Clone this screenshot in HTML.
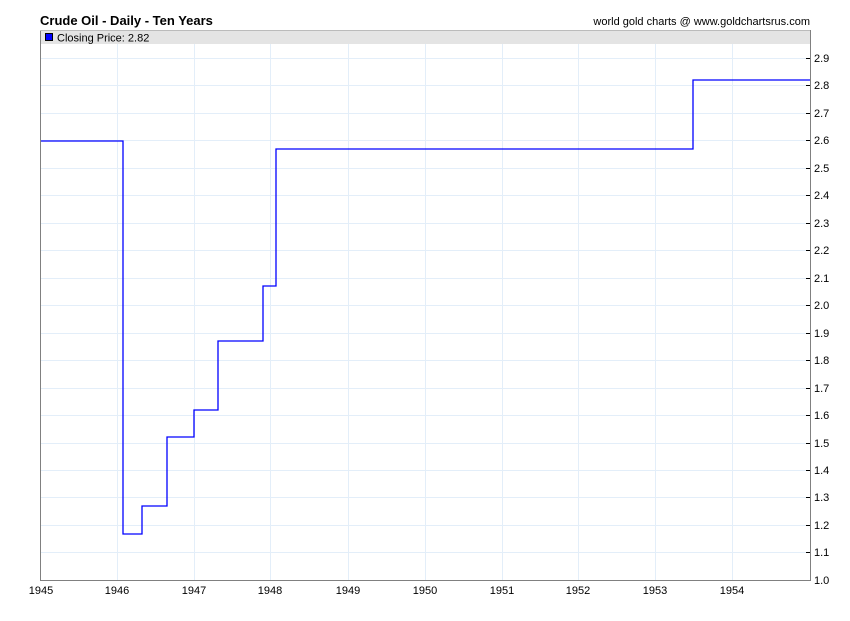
<!DOCTYPE html>
<html><head><style>body{margin:0;background:#fff;width:850px;height:616px;overflow:hidden}</style></head><body>
<svg width="850" height="616" xmlns="http://www.w3.org/2000/svg" font-family="Liberation Sans, Arial, sans-serif">
<text x="40" y="25" font-size="13" font-weight="bold" fill="#000">Crude Oil - Daily - Ten Years</text>
<text x="810" y="25" font-size="11" text-anchor="end" fill="#000">world gold charts @ www.goldchartsrus.com</text>
<g stroke="#e3eef9" stroke-width="1">
<line x1="117.5" y1="30" x2="117.5" y2="580"/><line x1="194.5" y1="30" x2="194.5" y2="580"/><line x1="270.5" y1="30" x2="270.5" y2="580"/><line x1="348.5" y1="30" x2="348.5" y2="580"/><line x1="425.5" y1="30" x2="425.5" y2="580"/><line x1="502.5" y1="30" x2="502.5" y2="580"/><line x1="578.5" y1="30" x2="578.5" y2="580"/><line x1="655.5" y1="30" x2="655.5" y2="580"/><line x1="732.5" y1="30" x2="732.5" y2="580"/>
<line x1="40" y1="58.5" x2="810" y2="58.5"/><line x1="40" y1="85.5" x2="810" y2="85.5"/><line x1="40" y1="113.5" x2="810" y2="113.5"/><line x1="40" y1="140.5" x2="810" y2="140.5"/><line x1="40" y1="168.5" x2="810" y2="168.5"/><line x1="40" y1="195.5" x2="810" y2="195.5"/><line x1="40" y1="223.5" x2="810" y2="223.5"/><line x1="40" y1="250.5" x2="810" y2="250.5"/><line x1="40" y1="278.5" x2="810" y2="278.5"/><line x1="40" y1="305.5" x2="810" y2="305.5"/><line x1="40" y1="333.5" x2="810" y2="333.5"/><line x1="40" y1="360.5" x2="810" y2="360.5"/><line x1="40" y1="388.5" x2="810" y2="388.5"/><line x1="40" y1="415.5" x2="810" y2="415.5"/><line x1="40" y1="443.5" x2="810" y2="443.5"/><line x1="40" y1="470.5" x2="810" y2="470.5"/><line x1="40" y1="497.5" x2="810" y2="497.5"/><line x1="40" y1="525.5" x2="810" y2="525.5"/><line x1="40" y1="552.5" x2="810" y2="552.5"/>
</g>
<rect x="40" y="30" width="770" height="14" fill="#e4e4e4"/>
<rect x="45.5" y="33.5" width="7" height="7" fill="#0000ff" stroke="#000"/>
<text x="57" y="41.5" font-size="11" fill="#000">Closing Price: 2.82</text>
<polyline fill="none" stroke="#0000ff" stroke-width="1.3" points="40,141 123,141 123,534 142,534 142,506 167,506 167,437 194,437 194,410 218,410 218,341 263,341 263,286 276,286 276,149 693,149 693,80 810,80"/>
<path d="M40.5 30V580.5H810.5V30" fill="none" stroke="#808080"/>
<line x1="40" y1="30.5" x2="810" y2="30.5" stroke="#bbb"/>
<g stroke="#000"><line x1="806" y1="58.5" x2="810" y2="58.5"/><line x1="806" y1="85.5" x2="810" y2="85.5"/><line x1="806" y1="113.5" x2="810" y2="113.5"/><line x1="806" y1="140.5" x2="810" y2="140.5"/><line x1="806" y1="168.5" x2="810" y2="168.5"/><line x1="806" y1="195.5" x2="810" y2="195.5"/><line x1="806" y1="223.5" x2="810" y2="223.5"/><line x1="806" y1="250.5" x2="810" y2="250.5"/><line x1="806" y1="278.5" x2="810" y2="278.5"/><line x1="806" y1="305.5" x2="810" y2="305.5"/><line x1="806" y1="333.5" x2="810" y2="333.5"/><line x1="806" y1="360.5" x2="810" y2="360.5"/><line x1="806" y1="388.5" x2="810" y2="388.5"/><line x1="806" y1="415.5" x2="810" y2="415.5"/><line x1="806" y1="443.5" x2="810" y2="443.5"/><line x1="806" y1="470.5" x2="810" y2="470.5"/><line x1="806" y1="497.5" x2="810" y2="497.5"/><line x1="806" y1="525.5" x2="810" y2="525.5"/><line x1="806" y1="552.5" x2="810" y2="552.5"/></g>
<g font-size="11" fill="#000">
<text x="814" y="62">2.9</text><text x="814" y="89">2.8</text><text x="814" y="117">2.7</text><text x="814" y="144">2.6</text><text x="814" y="172">2.5</text><text x="814" y="199">2.4</text><text x="814" y="227">2.3</text><text x="814" y="254">2.2</text><text x="814" y="282">2.1</text><text x="814" y="309">2.0</text><text x="814" y="337">1.9</text><text x="814" y="364">1.8</text><text x="814" y="392">1.7</text><text x="814" y="419">1.6</text><text x="814" y="447">1.5</text><text x="814" y="474">1.4</text><text x="814" y="501">1.3</text><text x="814" y="529">1.2</text><text x="814" y="556">1.1</text><text x="814" y="584">1.0</text>
</g>
<g font-size="11" fill="#000" text-anchor="middle">
<text x="41" y="594">1945</text><text x="117" y="594">1946</text><text x="194" y="594">1947</text><text x="270" y="594">1948</text><text x="348" y="594">1949</text><text x="425" y="594">1950</text><text x="502" y="594">1951</text><text x="578" y="594">1952</text><text x="655" y="594">1953</text><text x="732" y="594">1954</text>
</g>
</svg>
</body></html>
